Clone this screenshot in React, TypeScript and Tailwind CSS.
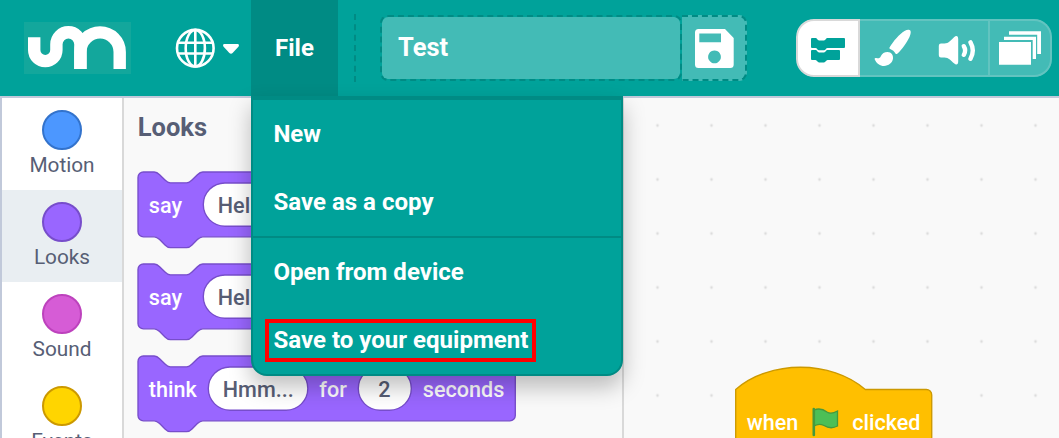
import React from "react";

const categories = [
  { name: "Motion", dot: "bg-[#4c97ff] border-[#3373cc]", row: "bg-white" },
  { name: "Looks", dot: "bg-[#9966ff] border-[#774dcb]", row: "bg-[#e9eef2]" },
  { name: "Sound", dot: "bg-[#d65cd6] border-[#bd42bd]", row: "bg-white" },
  { name: "Events", dot: "bg-[#ffd500] border-[#cc9900]", row: "bg-white" },
];

const stackPath = (w: number) =>
  `M0,4 A4,4 0 0,1 4,0 H12 c2,0 3,1 4,2 l4,4 c1,1 2,2 4,2 h12 c2,0 3,-1 4,-2 l4,-4 c1,-1 2,-2 4,-2 H${w - 4} a4,4 0 0,1 4,4 v40 a4,4 0 0,1 -4,4 H48 c-2,0 -3,1 -4,2 l-4,4 c-1,1 -2,2 -4,2 h-12 c-2,0 -3,-1 -4,-2 l-4,-4 c-1,-1 -2,-2 -4,-2 H4 a4,4 0 0,1 -4,-4 z`;

type Part = { text: string; x: number; field?: [number, number] };

function StackBlock({ width, parts }: { width: number; parts: Part[] }) {
  return (
    <svg width="400" height="92" viewBox="-1 -1 400 92" className="block shrink-0">
      <path d={stackPath(width / 1.35)} transform="scale(1.35)" fill="#9966ff" stroke="#774dcb" />
      {parts.map((p) => (
        <g key={p.text}>
          {p.field && (
            <rect x={p.field[0]} y="11" width={p.field[1]} height="43.2" rx="21.6" fill="#fff" stroke="#774dcb" strokeWidth="1.35" />
          )}
          <text x={p.x} y="41.3" fontSize="21.6" fontWeight="500" fill={p.field ? "#575e75" : "#fff"}>
            {p.text}
          </text>
        </g>
      ))}
    </svg>
  );
}

function Logo() {
  return (
    <svg width="107" height="52" viewBox="24 22 107 52" className="ml-6 shrink-0 bg-[#13a79c]">
      <g fill="none" stroke="#fff" strokeWidth="12.4">
        <path d="M34.2 37.3V50a11.1 11.1 0 0 0 22.2 0V44.3a12 12 0 0 1 24 0V69" />
        <path d="M80.4 69V52a19.65 19.65 0 0 1 39.3 0V69" />
      </g>
    </svg>
  );
}

function Globe() {
  return (
    <svg width="64" height="40" viewBox="175 28 64 40" className="ml-11 shrink-0">
      <g fill="none" stroke="#fff" strokeWidth="2.6">
        <circle cx="195.3" cy="48.2" r="18.3" />
        <ellipse cx="195.3" cy="48.2" rx="9.6" ry="18.3" />
        <path d="M195.3 30V66.5M178 42.7H212.6M178 53.5H212.6" />
      </g>
      <path d="M224.5 44H237.5C239 44 239.4 45.6 238.4 46.7L232.6 53Q231 54.6 229.4 53L223.6 46.7C222.6 45.6 223 44 224.5 44Z" fill="#fff" />
    </svg>
  );
}

function Floppy() {
  return (
    <svg width="39" height="39" viewBox="695 28.5 39 39">
      <path fillRule="evenodd" fill="#fff" d="M698.5 28.5H725L733.7 37.5V64Q733.7 67.5 730.2 67.5H698.5Q695 67.5 695 64V32Q695 28.5 698.5 28.5ZM699.3 33V41.7H721V33ZM714.5 50a6.4 6.4 0 1 0 .01 0Z" />
    </svg>
  );
}

function CodeIcon() {
  return (
    <svg width="34" height="25" viewBox="811 38 34 25">
      <g fill="#00a29a">
        <path d="M812 38H815.5C817 38 817.5 40.4 819 40.4H824C825.5 40.4 826 38 827.5 38H844Q845 38 845 39V47Q845 48 844 48H827.5C826 48 825.5 50.3 824 50.3H819C817.5 50.3 817 48 815.5 48H812Q811 48 811 47V39Q811 38 812 38Z" />
        <path d="M812 50H815.5C817 50 817.5 52.4 819 52.4H824C825.5 52.4 826 50 827.5 50H839Q840 50 840 51V59Q840 60 839 60H827.5C826 60 825.5 62.5 824 62.5H819C817.5 62.5 817 60 815.5 60H812Q811 60 811 59V51Q811 50 812 50Z" />
      </g>
    </svg>
  );
}

function BrushIcon() {
  return (
    <svg width="38" height="38" viewBox="874 29 38 38">
      <g fill="#fff">
        <path d="M909.5 30C911.5 30.6 910.8 34 909.5 37C907 42.5 902 49.5 897.5 53.6C896.5 54.6 895.8 54 895.3 53.2C894.3 51.5 892.5 49.8 890.6 49.2C889.4 48.8 889 48.2 889.8 47C893.5 41 899.5 34 904.5 31C906.5 30 908 29.6 909.5 30Z" />
        <path d="M887.5 52C891.5 52 893.3 55 893 58.6C892.6 63 888.5 66 884 66C880 66 876.8 63.6 875 60C874.3 58.6 874.6 57.5 876.3 58C878.5 58.8 880 58.2 880.8 56.2C882 53.5 884.5 52 887.5 52Z" />
      </g>
    </svg>
  );
}

function SoundIcon() {
  return (
    <svg width="38" height="32" viewBox="937.5 34 38 32">
      <path fill="#fff" d="M940.5 43.5H944C948 43.5 951 39.5 953.5 37.2C956 35 957.7 36 957.7 39V61.5C957.7 64.5 956 65.6 953.5 63.3C951 61 948 57.5 944 57.5H940.5Q938.3 57.5 938.3 55.3V45.7Q938.3 43.5 940.5 43.5Z" />
      <path d="M963.3 46.2Q966 50.4 963.3 54.8" fill="none" stroke="#fff" strokeWidth="4.4" strokeLinecap="round" />
      <path d="M970 42.3Q974.6 50.4 970 58.8" fill="none" stroke="#fff" strokeWidth="4.4" strokeLinecap="round" />
    </svg>
  );
}

function StackIcon() {
  return (
    <svg width="42" height="34" viewBox="999 31 42 34">
      <path d="M999 42H1031V64.7H999ZM1004 36.8H1036V59H1032.7V39.9H1004ZM1009 31.3H1041V54H1037.2V34.7H1009Z" fill="#fff" />
    </svg>
  );
}

function Header() {
  return (
    <header className="flex h-[96px] shrink-0 items-center bg-[#00a29a] text-white">
      <Logo />
      <Globe />
      <div className="ml-3 flex h-full w-[87px] items-center justify-center bg-[#008b84] text-2xl font-bold">File</div>
      <div className="ml-4 h-[68px] w-0 border-l-2 border-dashed border-[#008b84]" />
      <div className="ml-6 flex h-[66px] w-[302px] items-center rounded-lg border-2 border-dashed border-[#008b84] bg-[#43bbb6] bg-clip-padding pb-0.5 pl-4 text-[25.5px] font-bold">
        <span>Test</span>
      </div>
      <div className="flex h-[66px] w-[65px] items-center justify-center rounded-r-lg border-y-2 border-r-2 border-dashed border-[#008b84] bg-[#43bbb6] pl-0.5">
        <Floppy />
      </div>
      <nav className="ml-[49px] flex h-[58px] w-[256px] overflow-hidden rounded-[18px] bg-[#43bbb6]">
        <div className="flex w-[64px] items-center justify-center rounded-l-[18px] border-2 border-[#d9d9d9] bg-white pt-[5px]">
          <CodeIcon />
        </div>
        <div className="flex flex-1 rounded-r-[18px] border-y-2 border-r-2 border-[#62c4c0]">
          <div className="flex w-[64px] items-center justify-center pl-0.5">
            <BrushIcon />
          </div>
          <div className="flex w-[66px] items-center justify-center border-r-2 border-[#62c4c0] pl-px pt-1">
            <SoundIcon />
          </div>
          <div className="flex flex-1 items-center justify-center">
            <StackIcon />
          </div>
        </div>
      </nav>
    </header>
  );
}

function FileMenu() {
  return (
    <div className="absolute left-[251px] top-[96px] flex h-[280px] w-[372px] flex-col rounded-b-2xl border-2 border-t-4 border-[#008b84] bg-[#00a29a] text-[24.05px] font-bold text-white shadow-[0_11px_22px_rgba(0,0,0,0.25)]">
      <div className="flex h-[68px] items-center pl-[20.4px]">New</div>
      <div className="flex h-[68px] items-center pl-[20.4px]">Save as a copy</div>
      <div className="flex h-[70px] items-center border-t-2 border-[#008b84] pl-[20.4px]">Open from device</div>
      <div className="flex h-[68px] items-center pl-3">
        <div className="flex h-[43px] w-[271px] items-center whitespace-nowrap border-4 border-[#ff0000] pl-[4.4px]">Save to your equipment</div>
      </div>
    </div>
  );
}

function Workspace() {
  return (
    <svg width="435" height="340" viewBox="624 98 435 340" className="block shrink-0 bg-[#f9f9f9]">
      <defs>
        <pattern id="grid" x="630.5" y="98.5" width="54" height="54" patternUnits="userSpaceOnUse">
          <circle cx="27" cy="27" r="1.4" fill="#dddddd" />
        </pattern>
      </defs>
      <rect x="624" y="98" width="435" height="340" fill="url(#grid)" />
      <path transform="translate(735.7 389.5) scale(1.35)" d="M0,0 c25,-22 71,-22 96,0 H141.2 a4,4 0 0,1 4,4 v50 H0 z" fill="#ffbf00" stroke="#cc9900" />
      <g fontSize="21.6" fontWeight="500" fill="#fff">
        <text x="746.7" y="430">when</text>
        <text x="852.2" y="430">clicked</text>
      </g>
      <path d="M814 410C819 408 823 409 827 412C830 414 834 413 837.5 411V426C832 429 828 428 824 425.5C820 423.5 817 424 814 426Z" fill="#4cbf56" stroke="#45993d" strokeWidth="1.3" />
      <path d="M813.8 409V435" stroke="#45993d" strokeWidth="2.6" strokeLinecap="round" />
    </svg>
  );
}

export default function App() {
  return (
    <div className="relative flex h-[438px] w-[1059px] flex-col overflow-hidden bg-[#f9f9f9] font-[Roboto,sans-serif]">
      <Header />
      <main className="flex h-[342px] border-l-2 border-t-2 border-[#c1c9da]">
        <aside className="flex w-[122px] shrink-0 flex-col overflow-hidden border-r-2 border-[#d9d9d9] bg-white">
          {categories.map((c) => (
            <div key={c.name} className={`flex h-[92px] shrink-0 flex-col items-center pt-3 ${c.row}`}>
              <div className={`size-10 shrink-0 rounded-full border-2 ${c.dot}`} />
              <span className="mt-px text-[20.8px] leading-7 text-[#575e75]">{c.name}</span>
            </div>
          ))}
        </aside>
        <section className="flex w-[500px] shrink-0 flex-col overflow-hidden border-r-2 border-[#d9d9d9] bg-[#f9f9f9] pl-[13px]">
          <h2 className="h-[73px] shrink-0 pl-[0.7px] pt-[11px] text-[25.5px] font-bold leading-[36px] text-[#575e75]">Looks</h2>
          <StackBlock width={420} parts={[{ text: "say", x: 10.8 }, { text: "Hello!", x: 79.8, field: [65.3, 84] }]} />
          <StackBlock width={420} parts={[{ text: "say", x: 10.8 }, { text: "Hello!", x: 79.8, field: [65.3, 84] }]} />
          <StackBlock
            width={377.3}
            parts={[
              { text: "think", x: 10.8 },
              { text: "Hmm...", x: 84.8, field: [70.3, 99.5] },
              { text: "for", x: 181.3 },
              { text: "2", x: 240.3, field: [220.3, 53] },
              { text: "seconds", x: 284.8 },
            ]}
          />
        </section>
        <Workspace />
      </main>
      <FileMenu />
    </div>
  );
}
